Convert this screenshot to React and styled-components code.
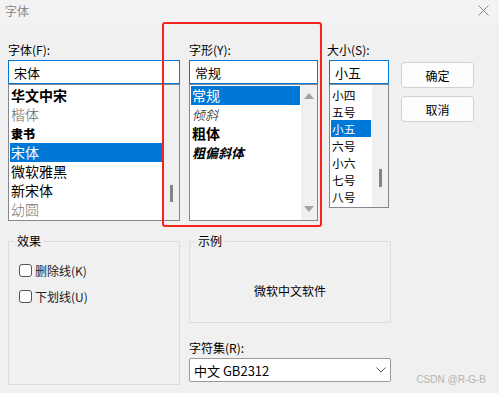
import React from 'react';
import styled, { createGlobalStyle, css } from 'styled-components';

const GlobalStyle = createGlobalStyle`
  html, body { margin: 0; padding: 0; background: #f0f0f0; }
  body {
    font-family: "Noto Sans CJK SC", "Noto Sans", sans-serif;
    font-size: 12px;
    color: #000;
  }
`;

// whole dialog
const Dialog = styled.div`
  position: relative;
  width: 499px;
  height: 393px;
  background: #f0f0f0;
  overflow: hidden;
`;

const TitleBar = styled.div`
  box-sizing: border-box;
  height: 24px;
  display: flex;
  align-items: center;
  justify-content: space-between;
  padding: 0 10px 4px 5px;
  background: #f3f3f3;
  color: #8a8a8a;
  font-size: 12px;
`;

const Body = styled.div`
  padding: 16px 0 0 8px;
`;

const TopGrid = styled.div`
  display: grid;
  grid-template-columns: 172px 129px 62px 76px;
  column-gap: 9px;
  & > :nth-child(3) { margin-left: 2px; }
  & > :nth-child(4) { margin-left: 3px; }
`;

const Column = styled.div`
  display: flex;
  flex-direction: column;
`;

const Label = styled.div`
  height: 20px;
  line-height: 20px;
  white-space: nowrap;
  margin-left: ${p => p.$shift || 0}px;
  margin-top: ${p => p.$top || 0}px;
`;

const TextBox = styled.div`
  box-sizing: border-box;
  height: 24px;
  border: 1px solid #0078d7;
  background: #fff;
  padding: 0 5px;
  display: flex;
  align-items: center;
  font-size: 13px;
`;

const ListBox = styled.div`
  box-sizing: border-box;
  height: ${p => p.$height}px;
  border: 1px solid #828790;
  background: #fff;
  display: flex;
`;

const Items = styled.div`
  flex: 1;
  padding: 1px 1px 0;
  overflow: hidden;
`;

const Item = styled.div`
  height: ${p => p.$h}px;
  line-height: ${p => p.$h}px;
  padding-left: 1px;
  font-size: ${p => p.$size || 14}px;
  white-space: nowrap;
  ${p => p.$selected && css`
    background: #0078d7;
    color: #fff;
  `}
`;

const ScrollTrack = styled.div`
  width: 16px;
  background: #f0f0f0;
  display: flex;
  flex-direction: column;
  align-items: center;
  justify-content: ${p => (p.$arrows ? 'space-between' : 'flex-start')};
  padding: ${p => (p.$arrows ? '8px 0' : '0')};
  box-sizing: border-box;
`;

const Thumb = styled.div`
  width: 3px;
  height: ${p => p.$len || 17}px;
  background: #858585;
  margin-top: ${p => p.$top}px;
`;

const Arrow = styled.div`
  width: 0;
  height: 0;
  border-left: 5px solid transparent;
  border-right: 5px solid transparent;
  ${p => (p.$down
    ? css`border-top: 6px solid #a3a3a3;`
    : css`border-bottom: 6px solid #a3a3a3;`)}
`;

const ButtonStack = styled.div`
  display: flex;
  flex-direction: column;
  gap: 8px;
  padding-top: 22px;
`;

const Button = styled.div`
  box-sizing: border-box;
  height: 26px;
  border: 1px solid #d0d0d0;
  border-radius: 4px;
  background: #fdfdfd;
  display: flex;
  align-items: center;
  justify-content: center;
  font-size: 12px;
`;

const BottomGrid = styled.div`
  display: grid;
  grid-template-columns: 172px 202px;
  column-gap: 9px;
  margin-top: 20px;
`;

const Group = styled.fieldset`
  box-sizing: border-box;
  margin: 0;
  height: ${p => p.$height}px;
  border: 1px solid #dcdcdc;
  padding: 0 10px;
  position: relative;
`;

const Legend = styled.legend`
  position: absolute;
  top: -9px;
  left: 5px;
  padding: 0 3px;
  background: #f0f0f0;
  line-height: 16px;
  font-size: 12px;
`;

const Checks = styled.div`
  padding-top: 15px;
`;

const CheckRow = styled.label`
  display: flex;
  align-items: center;
  gap: 3px;
  height: 26px;
  font-size: 12px;
  color: #222;
`;

const CheckBox = styled.span`
  box-sizing: border-box;
  width: 13px;
  height: 13px;
  border: 1px solid #555;
  border-radius: 3px;
  background: #fff;
`;

const Sample = styled.div`
  height: 80px;
  display: flex;
  align-items: center;
  justify-content: center;
  padding-top: 17px;
  box-sizing: border-box;
  font-size: 12px;
`;

const RightBottom = styled.div`
  display: flex;
  flex-direction: column;
`;

const Select = styled.div`
  box-sizing: border-box;
  height: 24px;
  border: 1px solid #9a9a9a;
  border-radius: 2px;
  background: #fff;
  display: flex;
  align-items: center;
  justify-content: space-between;
  padding: 0 4px;
  font-size: 13px;
`;

const Watermark = styled.div`
  position: absolute;
  right: 13px;
  bottom: 8px;
  color: #b4b4b4;
  font-family: "Liberation Sans", Arial, sans-serif;
  font-size: 10px;
`;

// red annotation frame drawn over the style column
const Highlight = styled.div`
  position: absolute;
  left: 162px;
  top: 22px;
  width: 160px;
  height: 205px;
  box-sizing: border-box;
  border: 2px solid #f5241c;
  border-radius: 3px;
  pointer-events: none;
`;

const fonts = [
  { name: '华文中宋', style: { fontWeight: 700 } },
  { name: '楷体', style: { color: '#666', fontWeight: 300 } },
  { name: '隶书', style: { fontWeight: 900, fontSize: 12 } },
  { name: '宋体', selected: true },
  { name: '微软雅黑' },
  { name: '新宋体' },
  { name: '幼圆', style: { color: '#777', fontWeight: 300 } },
];

const styles = [
  { name: '常规', selected: true },
  { name: '倾斜', style: { fontStyle: 'italic', fontWeight: 300, fontSize: 13 } },
  { name: '粗体', style: { fontWeight: 700 } },
  { name: '粗偏斜体', style: { fontStyle: 'italic', fontWeight: 700, fontSize: 13 } },
];

const sizes = ['小四', '五号', '小五', '六号', '小六', '七号', '八号'];

function Close() {
  return (
    <svg width="11" height="11" viewBox="0 0 11 11">
      <path d="M0.5 0.5 L10.5 10.5 M10.5 0.5 L0.5 10.5" stroke="#8a8a8a" strokeWidth="1" />
    </svg>
  );
}

function Chevron() {
  return (
    <svg width="10" height="6" viewBox="0 0 10 6">
      <path d="M0.5 0.5 L5 5 L9.5 0.5" fill="none" stroke="#555" strokeWidth="1" />
    </svg>
  );
}

export default function App() {
  return (
    <Dialog>
      <GlobalStyle />
      <TitleBar>
        <span>字体</span>
        <Close />
      </TitleBar>

      <Body>
        <TopGrid>
          <Column>
            <Label>字体(F):</Label>
            <TextBox>宋体</TextBox>
            <ListBox $height={137}>
              <Items>
                {fonts.map(f => (
                  <Item key={f.name} $h={19} $selected={f.selected} style={f.style}>{f.name}</Item>
                ))}
              </Items>
              <ScrollTrack>
                <Thumb $top={100} />
              </ScrollTrack>
            </ListBox>
          </Column>

          <Column>
            <Label>字形(Y):</Label>
            <TextBox>常规</TextBox>
            <ListBox $height={137}>
              <Items>
                {styles.map(s => (
                  <Item key={s.name} $h={19} $selected={s.selected} style={s.style}>{s.name}</Item>
                ))}
              </Items>
              <ScrollTrack $arrows>
                <Arrow />
                <Arrow $down />
              </ScrollTrack>
            </ListBox>
          </Column>

          <Column>
            <Label $shift={-2}>大小(S):</Label>
            <TextBox>小五</TextBox>
            <ListBox $height={124}>
              <Items>
                {sizes.map(s => (
                  <Item key={s} $h={17} $size={11.7} $selected={s === '小五'}>{s}</Item>
                ))}
              </Items>
              <ScrollTrack>
                <Thumb $top={84} $len={18} />
              </ScrollTrack>
            </ListBox>
          </Column>

          <ButtonStack>
            <Button>确定</Button>
            <Button>取消</Button>
          </ButtonStack>
        </TopGrid>

        <BottomGrid>
          <Group $height={144}>
            <Legend>效果</Legend>
            <Checks>
              <CheckRow><CheckBox />删除线(K)</CheckRow>
              <CheckRow><CheckBox />下划线(U)</CheckRow>
            </Checks>
          </Group>

          <RightBottom>
            <Group $height={82}>
              <Legend>示例</Legend>
              <Sample>微软中文软件</Sample>
            </Group>
            <Label $top={15}>字符集(R):</Label>
            <Select>
              <span>中文 GB2312</span>
              <Chevron />
            </Select>
          </RightBottom>
        </BottomGrid>
      </Body>

      <Highlight />
      <Watermark>CSDN @R-G-B</Watermark>
    </Dialog>
  );
}
